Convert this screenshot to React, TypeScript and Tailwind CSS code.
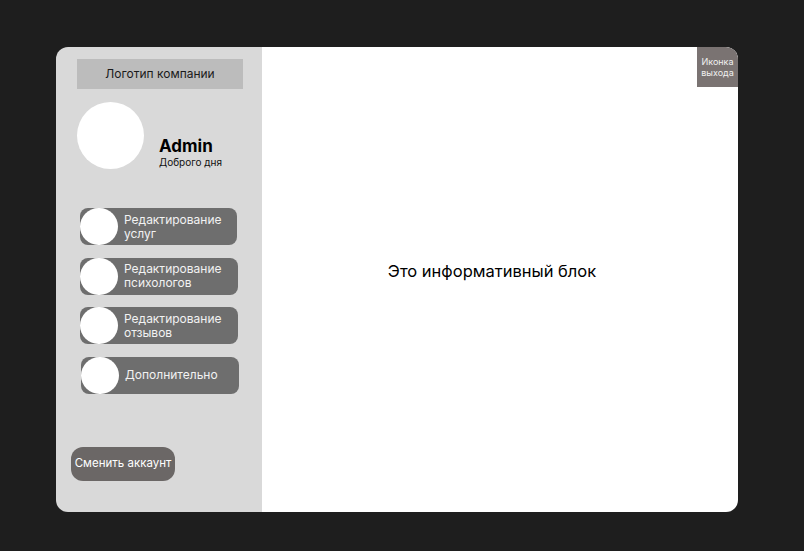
import React from 'react'

const MENU_ITEMS: { lines: string[]; offset: string }[] = [
  { lines: ['Редактирование', 'услуг'], offset: 'ml-[3px] w-[157px]' },
  { lines: ['Редактирование', 'психологов'], offset: 'ml-[3px] w-[158px]' },
  { lines: ['Редактирование', 'отзывов'], offset: 'ml-[3px] w-[158px]' },
  { lines: ['Дополнительно'], offset: 'ml-[4px] w-[158px]' },
]

// Pill-shaped nav item with a round placeholder on the left
function MenuItem({ lines, offset }: { lines: string[]; offset: string }) {
  return (
    <button
      type="button"
      className={`flex h-[37px] items-center rounded-[8px] bg-[#6e6e6e] text-left ${offset}`}
    >
      <span className="h-[37px] w-[38px] shrink-0 rounded-full bg-white" />
      <span className="ml-[6px] text-[12px] leading-[14px] text-[#f2f2f2]">
        {lines.map((l) => (
          <span key={l} className="block">
            {l}
          </span>
        ))}
      </span>
    </button>
  )
}

export default function App() {
  return (
    <div
      className="h-[551px] w-full bg-[#1e1e1e] pl-[56px] pt-[47px]"
      style={{ fontFamily: 'Inter, "Noto Sans", sans-serif' }}
    >
      <div className="flex h-[465px] w-[682px] overflow-hidden rounded-[12px]">
        {/* Sidebar */}
        <aside className="flex w-[206px] flex-col bg-[#d9d9d9] pb-[31px] pl-[21px] pt-[12px]">
          <div className="flex h-[30px] w-[166px] items-center justify-center bg-[#bcbcbc] text-[12px] text-[#1a1a1a]">
            Логотип компании
          </div>

          <div className="mt-[13px] flex items-start">
            <div className="h-[67px] w-[67px] rounded-full bg-white" />
            <div className="ml-[15px] mt-[34px] flex flex-col">
              <span className="text-[17px] font-bold leading-[20px] text-black">Admin</span>
              <span className="text-[10px] leading-[12px] text-[#111]">Доброго дня</span>
            </div>
          </div>

          <nav className="mt-[39px] flex flex-col gap-[12.5px]">
            {MENU_ITEMS.map((item) => (
              <MenuItem key={item.lines.join(' ')} lines={item.lines} offset={item.offset} />
            ))}
          </nav>

          <button
            type="button"
            className="-ml-[6px] mt-auto flex h-[34px] w-[104px] items-center justify-center rounded-[12px] bg-[#6b6766] text-[11.5px] text-white"
          >
            Сменить аккаунт
          </button>
        </aside>

        {/* Main info block */}
        <main className="relative flex flex-1 items-center justify-center bg-white pb-[16px] pr-[16px]">
          <p className="text-[16.5px] text-black">Это информативный блок</p>
          <button
            type="button"
            className="absolute right-0 top-0 flex h-[40px] w-[41px] flex-col items-center justify-center rounded-tr-[12px] bg-[#7a7372] text-[9px] leading-[11px] text-[#f0f0f0]"
          >
            <span>Иконка</span>
            <span>выхода</span>
          </button>
        </main>
      </div>
    </div>
  )
}
